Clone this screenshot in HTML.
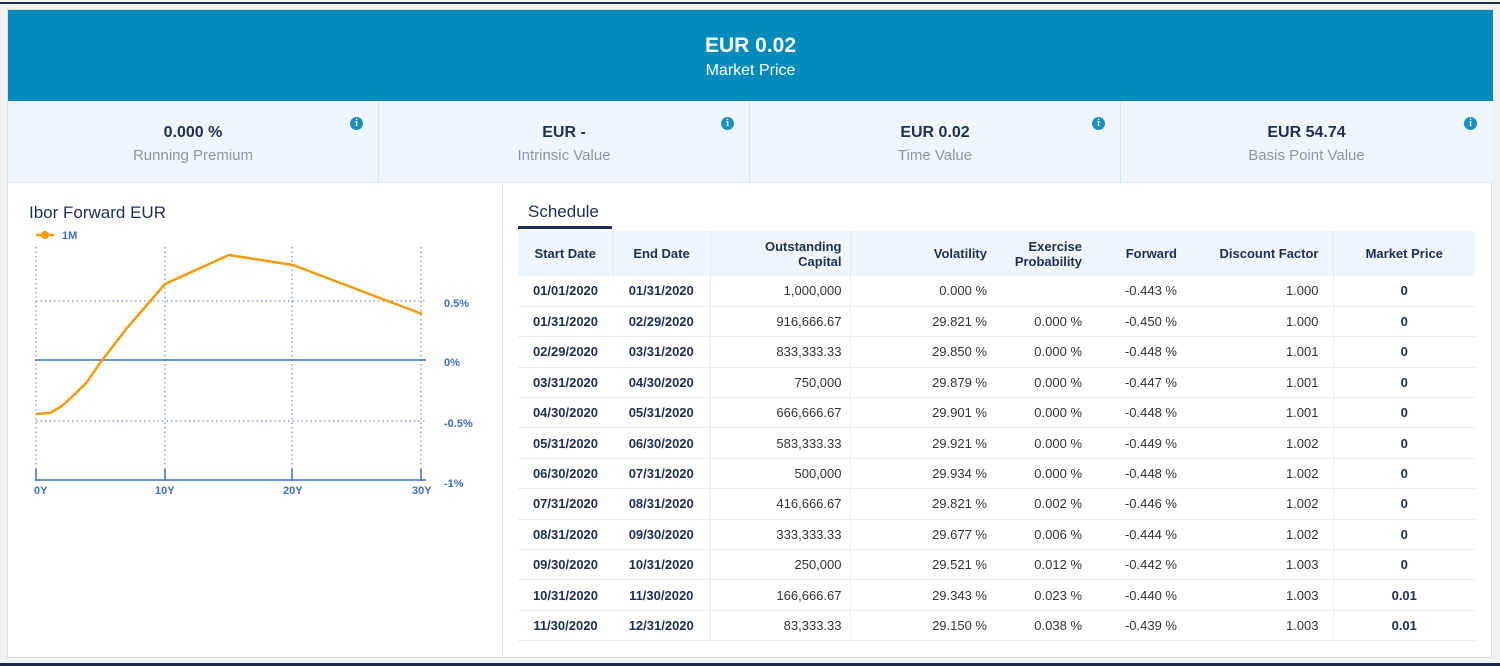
<!DOCTYPE html>
<html><head><meta charset="utf-8"><style>
*{box-sizing:border-box;margin:0;padding:0}
body{width:1500px;height:666px;background:#f2f2f2;font-family:"Liberation Sans",sans-serif;position:relative;overflow:hidden}
.topline{position:absolute;left:0;top:2px;width:1500px;height:2px;background:#1b2a4a}
.botline{position:absolute;left:0;top:663px;width:1500px;height:3px;background:#1b2a4a}
.card{position:absolute;left:7px;top:9px;width:1485px;height:649px;background:#fff;border:1px solid #ddd}
.hdr{position:absolute;left:0;top:0;width:1485px;height:91px;background:#008bba;color:#fff;text-align:center}
.hdr .v{position:absolute;top:24px;width:100%;font-size:21px;font-weight:bold}
.hdr .l{position:absolute;top:52px;width:100%;font-size:16px}
.stats{position:absolute;left:0;top:91px;width:1485px;height:82px;background:#f0f6fd;border-bottom:1px solid #e0e8f0}
.st{position:absolute;top:0;height:82px;width:371px;border-right:1px solid #d8e2ee;text-align:center}
.st .v{position:absolute;top:23px;width:100%;font-size:16px;font-weight:bold;color:#1d2f55}
.st .l{position:absolute;top:46px;width:100%;font-size:15px;color:#8a99a6}
.st .i{position:absolute;top:16px;right:15px;width:13px;height:13px;border-radius:50%;background:#1a8fc0;color:#fff;font-size:10px;font-weight:bold;line-height:13px;text-align:center;font-family:"Liberation Serif",serif}
.divider{position:absolute;left:494px;top:174px;width:1px;height:475px;background:#e6e6e6}
.ct{position:absolute;left:21px;top:193px;font-size:17px;color:#1d2f55}
.tabs{position:absolute;left:520px;top:192px;font-size:17px;color:#1d2f55}
.tabline{position:absolute;left:510px;top:216px;width:94px;height:3px;background:#1d2f55}
table{position:absolute;left:510px;top:221px;width:957px;border-collapse:collapse;table-layout:fixed;font-size:13px;color:#333}
th{background:#f0f6fd;height:45px;font-weight:bold;color:#1d2f55;font-size:13px;padding:0 14px;border-right:1px solid #e0e8f0}
td{height:30.4px;border-bottom:1px solid #e8ecf0;padding:0 14px;white-space:nowrap}
td.b{font-weight:bold;color:#1d2f55}
td.r,th.r{text-align:right}
td.c,th.c{text-align:center}
.sep{border-right:1px solid #e8ecf0}
</style></head><body>
<div class="topline"></div><div class="botline"></div>
<div class="card">
<div class="hdr"><div class="v">EUR 0.02</div><div class="l">Market Price</div></div>
<div class="stats">
<div class="st" style="left:0"><div class="v">0.000 %</div><div class="l">Running Premium</div><div class="i">i</div></div>
<div class="st" style="left:371px"><div class="v">EUR -</div><div class="l">Intrinsic Value</div><div class="i">i</div></div>
<div class="st" style="left:742px"><div class="v">EUR 0.02</div><div class="l">Time Value</div><div class="i">i</div></div>
<div class="st" style="left:1113px;border-right:none"><div class="v">EUR 54.74</div><div class="l">Basis Point Value</div><div class="i">i</div></div>
</div>
<div class="divider"></div>
<div class="ct">Ibor Forward EUR</div>
<div class="tabs">Schedule</div><div class="tabline"></div>
<table>
<colgroup><col style="width:95px"><col style="width:97px"><col style="width:140px"><col style="width:145px"><col style="width:95px"><col style="width:95px"><col style="width:148px"><col style="width:142px"></colgroup>
<tr><th class="c" style="padding:0">Start Date</th><th class="c" style="padding:0">End Date</th><th class="r" style="padding-right:8px">Outstanding<br>Capital</th><th class="r" style="border-right:none;padding-right:8px">Volatility</th><th class="r" style="border-right:none;padding-right:8px">Exercise<br>Probability</th><th class="r" style="border-right:none;padding-right:8px">Forward</th><th class="r" style="padding-right:14px">Discount Factor</th><th class="c" style="border-right:none">Market Price</th></tr>
<tr><td class="b c" style="padding:0">01/01/2020</td><td class="b c sep" style="padding:0">01/31/2020</td><td class="r sep" style="padding-right:8px">1,000,000</td><td class="r" style="padding-right:8px">0.000 %</td><td class="r" style="padding-right:8px"></td><td class="r" style="padding-right:8px">-0.443 %</td><td class="r sep">1.000</td><td class="b c">0</td></tr>
<tr><td class="b c" style="padding:0">01/31/2020</td><td class="b c sep" style="padding:0">02/29/2020</td><td class="r sep" style="padding-right:8px">916,666.67</td><td class="r" style="padding-right:8px">29.821 %</td><td class="r" style="padding-right:8px">0.000 %</td><td class="r" style="padding-right:8px">-0.450 %</td><td class="r sep">1.000</td><td class="b c">0</td></tr>
<tr><td class="b c" style="padding:0">02/29/2020</td><td class="b c sep" style="padding:0">03/31/2020</td><td class="r sep" style="padding-right:8px">833,333.33</td><td class="r" style="padding-right:8px">29.850 %</td><td class="r" style="padding-right:8px">0.000 %</td><td class="r" style="padding-right:8px">-0.448 %</td><td class="r sep">1.001</td><td class="b c">0</td></tr>
<tr><td class="b c" style="padding:0">03/31/2020</td><td class="b c sep" style="padding:0">04/30/2020</td><td class="r sep" style="padding-right:8px">750,000</td><td class="r" style="padding-right:8px">29.879 %</td><td class="r" style="padding-right:8px">0.000 %</td><td class="r" style="padding-right:8px">-0.447 %</td><td class="r sep">1.001</td><td class="b c">0</td></tr>
<tr><td class="b c" style="padding:0">04/30/2020</td><td class="b c sep" style="padding:0">05/31/2020</td><td class="r sep" style="padding-right:8px">666,666.67</td><td class="r" style="padding-right:8px">29.901 %</td><td class="r" style="padding-right:8px">0.000 %</td><td class="r" style="padding-right:8px">-0.448 %</td><td class="r sep">1.001</td><td class="b c">0</td></tr>
<tr><td class="b c" style="padding:0">05/31/2020</td><td class="b c sep" style="padding:0">06/30/2020</td><td class="r sep" style="padding-right:8px">583,333.33</td><td class="r" style="padding-right:8px">29.921 %</td><td class="r" style="padding-right:8px">0.000 %</td><td class="r" style="padding-right:8px">-0.449 %</td><td class="r sep">1.002</td><td class="b c">0</td></tr>
<tr><td class="b c" style="padding:0">06/30/2020</td><td class="b c sep" style="padding:0">07/31/2020</td><td class="r sep" style="padding-right:8px">500,000</td><td class="r" style="padding-right:8px">29.934 %</td><td class="r" style="padding-right:8px">0.000 %</td><td class="r" style="padding-right:8px">-0.448 %</td><td class="r sep">1.002</td><td class="b c">0</td></tr>
<tr><td class="b c" style="padding:0">07/31/2020</td><td class="b c sep" style="padding:0">08/31/2020</td><td class="r sep" style="padding-right:8px">416,666.67</td><td class="r" style="padding-right:8px">29.821 %</td><td class="r" style="padding-right:8px">0.002 %</td><td class="r" style="padding-right:8px">-0.446 %</td><td class="r sep">1.002</td><td class="b c">0</td></tr>
<tr><td class="b c" style="padding:0">08/31/2020</td><td class="b c sep" style="padding:0">09/30/2020</td><td class="r sep" style="padding-right:8px">333,333.33</td><td class="r" style="padding-right:8px">29.677 %</td><td class="r" style="padding-right:8px">0.006 %</td><td class="r" style="padding-right:8px">-0.444 %</td><td class="r sep">1.002</td><td class="b c">0</td></tr>
<tr><td class="b c" style="padding:0">09/30/2020</td><td class="b c sep" style="padding:0">10/31/2020</td><td class="r sep" style="padding-right:8px">250,000</td><td class="r" style="padding-right:8px">29.521 %</td><td class="r" style="padding-right:8px">0.012 %</td><td class="r" style="padding-right:8px">-0.442 %</td><td class="r sep">1.003</td><td class="b c">0</td></tr>
<tr><td class="b c" style="padding:0">10/31/2020</td><td class="b c sep" style="padding:0">11/30/2020</td><td class="r sep" style="padding-right:8px">166,666.67</td><td class="r" style="padding-right:8px">29.343 %</td><td class="r" style="padding-right:8px">0.023 %</td><td class="r" style="padding-right:8px">-0.440 %</td><td class="r sep">1.003</td><td class="b c">0.01</td></tr>
<tr><td class="b c" style="padding:0">11/30/2020</td><td class="b c sep" style="padding:0">12/31/2020</td><td class="r sep" style="padding-right:8px">83,333.33</td><td class="r" style="padding-right:8px">29.150 %</td><td class="r" style="padding-right:8px">0.038 %</td><td class="r" style="padding-right:8px">-0.439 %</td><td class="r sep">1.003</td><td class="b c">0.01</td></tr>
</table>
</div>
<svg style="position:absolute;left:0;top:0" width="500" height="666" font-family="Liberation Sans,sans-serif" font-size="11" font-weight="bold" fill="#3a6fd0">
<line x1="36" y1="235" x2="54" y2="235" stroke="#f59a0c" stroke-width="2.5"/><circle cx="45" cy="235" r="4" fill="#f59a0c"/>
<text x="62" y="239">1M</text>
<g stroke="#5577c0" stroke-dasharray="1.5,3" stroke-width="1">
<line x1="36" y1="247" x2="36" y2="480"/><line x1="165" y1="247" x2="165" y2="480"/><line x1="292" y1="247" x2="292" y2="480"/><line x1="421" y1="247" x2="421" y2="480"/>
<line x1="36" y1="301" x2="425" y2="301"/><line x1="36" y1="421" x2="425" y2="421"/>
</g>
<g stroke="#3a6fd0" stroke-width="1.5">
<line x1="35" y1="360" x2="426" y2="360"/><line x1="35" y1="480" x2="426" y2="480"/>
<line x1="36" y1="469" x2="36" y2="481"/><line x1="165" y1="469" x2="165" y2="481"/><line x1="292" y1="469" x2="292" y2="481"/><line x1="421" y1="469" x2="421" y2="481"/>
</g>
<polyline fill="none" stroke="#f59a0c" stroke-width="2.5" stroke-linejoin="round" points="36,414 50,413 62,406 75,394 87,382 100,363 127,328 165,284 229,255 293,265 422,314"/>
<text x="34" y="494">0Y</text><text x="155" y="494">10Y</text><text x="283" y="494">20Y</text><text x="412" y="494">30Y</text>
<text x="444" y="307">0.5%</text><text x="444" y="366">0%</text><text x="444" y="427">-0.5%</text><text x="444" y="487">-1%</text>
</svg>
</body></html>
